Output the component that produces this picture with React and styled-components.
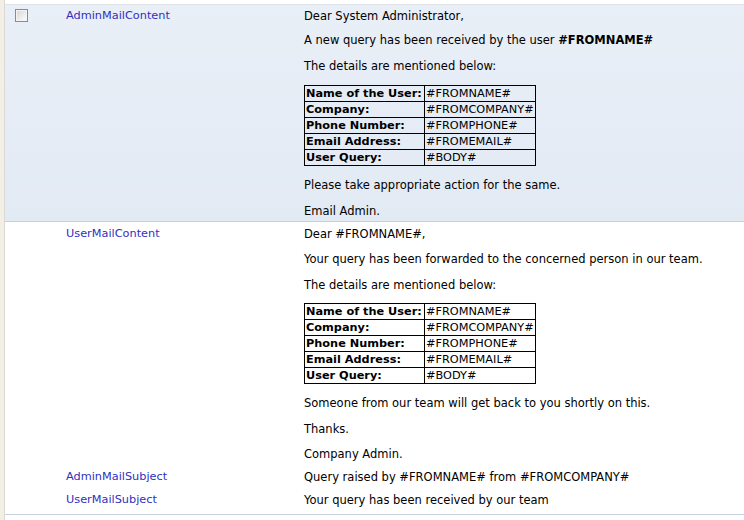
import styled, { createGlobalStyle } from 'styled-components';

const GlobalStyle = createGlobalStyle`
	html, body {
		margin: 0;
		padding: 0;
		background: #ffffff;
	}

	body {
		font-family: Verdana, "DejaVu Sans", sans-serif;
		font-size: 11.5px;
		color: #000000;
	}
`;

const fields = [
	['Name of the User:', '#FROMNAME#'],
	['Company:', '#FROMCOMPANY#'],
	['Phone Number:', '#FROMPHONE#'],
	['Email Address:', '#FROMEMAIL#'],
	['User Query:', '#BODY#'],
];

const Frame = styled.div`
	display: flex;
	min-height: 520px;
`;

const LeftStrip = styled.div`
	width: 4px;
	flex-shrink: 0;
	background: #f1efe6;
	border-right: 1px solid #dcdad0;
`;

const ListView = styled.div`
	flex: 1;
	margin-top: 4px;
	border-top: 1px solid #dfe3e8;
	align-self: flex-start;
`;

const Row = styled.div`
	display: grid;
	grid-template-columns: 61px 238px 1fr;
	background: ${({ selected }) => (selected ? 'linear-gradient(#e9eff7, #e2eaf4)' : 'transparent')};
	border-bottom: ${({ selected }) => (selected ? '1px solid #c2d0e2' : '0')};
	padding-top: ${({ selected }) => (selected ? '4px' : '5px')};
	padding-bottom: ${({ selected }) => (selected ? '3px' : '4px')};
`;

const CheckCell = styled.div`
	padding: 0 0 0 10px;
`;

const CheckBox = styled.span`
	display: block;
	width: 11px;
	height: 11px;
	border: 1px solid #8b8b8b;
	background: linear-gradient(135deg, #d4d4d4, #ffffff);
	box-shadow: inset 0 0 0 1px #f4f4f4;
`;

const NameCell = styled.div`
	line-height: 14px;
	font-size: 11.3px;
`;

const NameLink = styled.a`
	color: #3030c0;
	text-decoration: none;
	cursor: pointer;
`;

const Content = styled.div`
	line-height: 14px;
`;

const P = styled.p`
	margin: 0 0 ${({ $mb = 12 }) => $mb}px;
`;

const FieldTable = styled.table`
	border-collapse: collapse;
	border: 1px solid #000000;
	margin: 0 0 12px;
	font-size: 11.3px;
	line-height: 14px;

	td {
		border: 1px solid #000000;
		padding: 0 1px;
		height: 15px;
		white-space: nowrap;
	}

	td:first-child {
		font-weight: bold;
		width: 117px;
	}

	td:last-child {
		width: 108px;
	}
`;

const BottomLine = styled.div`
	margin-top: 3px;
	border-top: 1px solid #c6d2e2;
`;

const Fields = () => (
	<FieldTable>
		<tbody>
			{fields.map(([label, value]) => (
				<tr key={label}>
					<td>{label}</td>
					<td>{value}</td>
				</tr>
			))}
		</tbody>
	</FieldTable>
);

export default function App() {
	return (
		<>
			<GlobalStyle />
			<Frame>
				<LeftStrip />
				<ListView>
					<Row selected>
						<CheckCell>
							<CheckBox />
						</CheckCell>
						<NameCell>
							<NameLink>AdminMailContent</NameLink>
						</NameCell>
						<Content>
							<P $mb={10}>Dear System Administrator,</P>
							<P>
								A new query has been received by the user <b>#FROMNAME#</b>
							</P>
							<P>The details are mentioned below:</P>
							<Fields />
							<P>Please take appropriate action for the same.</P>
							<P $mb={0}>Email Admin.</P>
						</Content>
					</Row>
					<Row>
						<CheckCell />
						<NameCell>
							<NameLink>UserMailContent</NameLink>
						</NameCell>
						<Content>
							<P $mb={11}>Dear #FROMNAME#,</P>
							<P>Your query has been forwarded to the concerned person in our team.</P>
							<P $mb={11}>The details are mentioned below:</P>
							<Fields />
							<P>Someone from our team will get back to you shortly on this.</P>
							<P $mb={11}>Thanks.</P>
							<P $mb={0}>Company Admin.</P>
						</Content>
					</Row>
					<Row>
						<CheckCell />
						<NameCell>
							<NameLink>AdminMailSubject</NameLink>
						</NameCell>
						<Content>
							<P $mb={0}>Query raised by #FROMNAME# from #FROMCOMPANY#</P>
						</Content>
					</Row>
					<Row>
						<CheckCell />
						<NameCell>
							<NameLink>UserMailSubject</NameLink>
						</NameCell>
						<Content>
							<P $mb={0}>Your query has been received by our team</P>
						</Content>
					</Row>
					<BottomLine />
				</ListView>
			</Frame>
		</>
	);
}
